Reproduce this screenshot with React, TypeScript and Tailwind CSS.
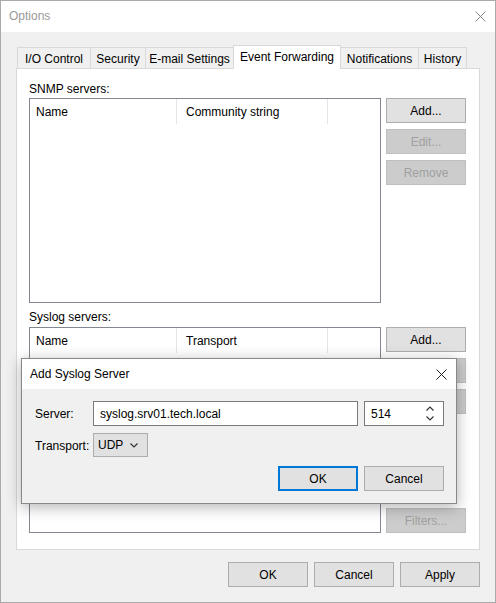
const tabs = [
  { label: 'I/O Control', w: 'w-[74px]' },
  { label: 'Security', w: 'w-[56px]' },
  { label: 'E-mail Settings', w: 'w-[89px]' },
  { label: 'Event Forwarding', w: 'w-[108px]', active: true },
  { label: 'Notifications', w: 'w-[79px]' },
  { label: 'History', w: 'w-[49px]' },
];

const CloseIcon = ({ color }: { color: string }) => (
  <svg width="11" height="11" viewBox="0 0 11 11" fill="none" stroke={color} strokeWidth="1">
    <path d="M0.5 0.5L10.5 10.5M10.5 0.5L0.5 10.5" />
  </svg>
);

const Chevron = ({ up = false }: { up?: boolean }) => (
  <svg width="8" height="5" viewBox="0 0 8 5" fill="none" stroke="#333" strokeWidth="1.2">
    <path d={up ? 'M0.5 4.5L4 1L7.5 4.5' : 'M0.5 0.5L4 4L7.5 0.5'} />
  </svg>
);

const Button = ({
  children,
  disabled = false,
  focused = false,
}: {
  children: React.ReactNode;
  disabled?: boolean;
  focused?: boolean;
}) => {
  let cls = 'bg-[#e1e1e1] border border-[#adadad] text-black';
  if (disabled) cls = 'bg-[#cccccc] border border-[#bfbfbf] text-[#a0a0a0]';
  if (focused) cls = 'bg-[#e1e1e1] border-2 border-[#0078d7] text-black';
  return (
    <div className={`w-[80px] h-[25px] flex-none flex items-center justify-center pt-[2px] ${cls}`}>
      {children}
    </div>
  );
};

const ListView = ({ columns, height }: { columns: string[]; height: string }) => (
  <div className={`w-[352px] ${height} flex-none border border-[#828790] bg-white`}>
    <div className="flex h-[25px]">
      <div className="w-[147px] pl-[6px] pt-[2px] flex items-center border-r border-[#e5e5e5]">
        {columns[0]}
      </div>
      <div className="w-[151px] pl-[9px] pt-[2px] flex items-center border-r border-[#e5e5e5]">
        {columns[1]}
      </div>
      <div className="flex-1" />
    </div>
  </div>
);

export default function App() {
  return (
    <div className="relative w-[496px] h-[603px] flex flex-col border border-[#aaaaaa] bg-[#f0f0f0] text-[12px] leading-[15px] text-black font-['Liberation_Sans',Arial,sans-serif]">
      {/* title bar */}
      <div className="h-[31px] flex-none flex items-center justify-between bg-white pl-[8px] pr-[9px]">
        <span className="text-[#999999]">Options</span>
        <CloseIcon color="#8a8a8a" />
      </div>

      <div className="flex-1 flex flex-col px-[15px]">
        {/* tabs */}
        <div className="mt-[13px] h-[23px] flex items-end pl-[1px]">
          {tabs.map((tab, i) =>
            tab.active ? (
              <div
                key={tab.label}
                className={`${tab.w} h-[24px] -mb-px -ml-px relative z-10 flex items-center justify-center bg-white border-l border-t border-r border-[#d9d9d9]`}
              >
                {tab.label}
              </div>
            ) : (
              <div
                key={tab.label}
                className={`${tab.w} h-[21px] ${i > 0 ? '-ml-px' : ''} flex items-center justify-center pt-[2px] bg-[#f0f0f0] border-l border-t border-r border-[#d9d9d9]`}
              >
                {tab.label}
              </div>
            )
          )}
        </div>

        {/* tab panel */}
        <div className="h-[482px] flex-none flex flex-col border border-[#d9d9d9] bg-white pl-[12px] pr-[12px] pt-[13px]">
          <div className="h-[16px]">SNMP servers:</div>
          <div className="flex gap-[5px]">
            <ListView columns={['Name', 'Community string']} height="h-[205px]" />
            <div className="flex flex-col gap-[6px]">
              <Button>Add...</Button>
              <Button disabled>Edit...</Button>
              <Button disabled>Remove</Button>
            </div>
          </div>

          <div className="h-[16px] mt-[7px] mb-[1px]">Syslog servers:</div>
          <div className="flex gap-[5px]">
            <ListView columns={['Name', 'Transport']} height="h-[206px]" />
            <div className="flex flex-col gap-[6px]">
              <Button>Add...</Button>
              <Button disabled>Edit...</Button>
              <Button disabled>Remove</Button>
              <div className="mt-auto">
                <Button disabled>Filters...</Button>
              </div>
            </div>
          </div>
        </div>

        {/* footer buttons */}
        <div className="mt-[12px] flex justify-end gap-[6px]">
          <Button>OK</Button>
          <Button>Cancel</Button>
          <Button>Apply</Button>
        </div>
      </div>

      {/* Add Syslog Server dialog */}
      <div className="absolute left-[20px] top-[357px] w-[436px] h-[146px] flex flex-col border border-[#888888] bg-[#f0f0f0] shadow-[0_3px_14px_rgba(0,0,0,0.3)] z-20">
        <div className="h-[30px] flex-none flex items-center justify-between bg-white pl-[8px] pr-[9px]">
          <span>Add Syslog Server</span>
          <CloseIcon color="#222222" />
        </div>
        <div className="flex flex-col pl-[13px] pr-[12px] pt-[12px]">
          <div className="flex items-center">
            <div className="w-[58px] pt-[2px]">Server:</div>
            <div className="w-[265px] h-[25px] flex items-center border border-[#7a7a7a] bg-white pl-[6px] pt-[1px]">
              syslog.srv01.tech.local
            </div>
            <div className="ml-[6px] w-[80px] h-[25px] flex items-center justify-between border border-[#7a7a7a] bg-white pl-[6px] pr-[9px]">
              <span className="pt-[1px]">514</span>
              <div className="flex flex-col gap-[5px]">
                <Chevron up />
                <Chevron />
              </div>
            </div>
          </div>
          <div className="flex items-center mt-[7px]">
            <div className="w-[58px] pt-[2px]">Transport:</div>
            <div className="w-[55px] h-[24px] flex items-center justify-between border border-[#adadad] bg-[#e1e1e1] pl-[4px] pr-[9px]">
              <span className="pt-[1px]">UDP</span>
              <Chevron />
            </div>
          </div>
          <div className="mt-[9px] flex justify-end gap-[6px]">
            <Button focused>OK</Button>
            <Button>Cancel</Button>
          </div>
        </div>
      </div>
    </div>
  );
}
